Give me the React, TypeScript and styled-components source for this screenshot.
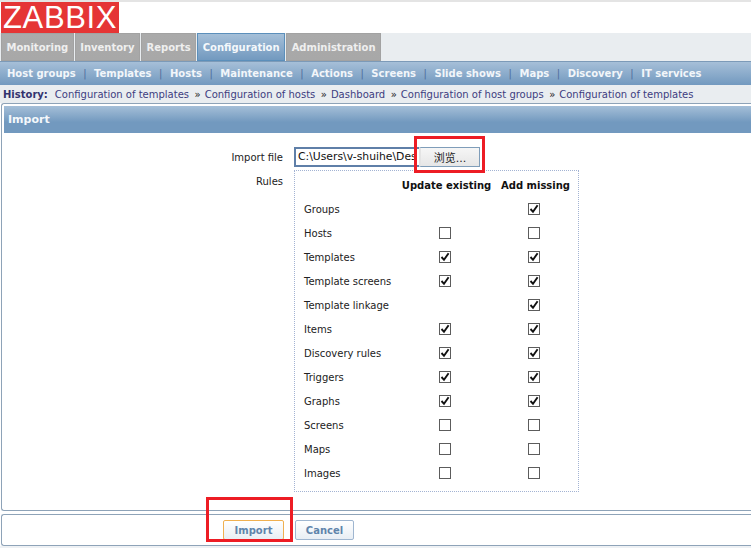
import styled, { createGlobalStyle } from "styled-components";

const GlobalStyle = createGlobalStyle`
    html, body {
        margin: 0;
        padding: 0;
        background: #fff;
    }
    body {
        width: 751px;
        height: 548px;
        overflow: hidden;
        font-family: "DejaVu Sans", Verdana, sans-serif;
        font-size: 10px;
    }
`;

const mainTabs = ["Monitoring", "Inventory", "Reports", "Configuration", "Administration"];
const subLinks = ["Host groups", "Templates", "Hosts", "Maintenance", "Actions", "Screens", "Slide shows", "Maps", "Discovery", "IT services"];
const history = [
    "Configuration of templates",
    "Configuration of hosts",
    "Dashboard",
    "Configuration of host groups",
    "Configuration of templates",
];

type Mark = boolean | null;
const rules: { name: string; update: Mark; add: Mark }[] = [
    { name: "Groups", update: null, add: true },
    { name: "Hosts", update: false, add: false },
    { name: "Templates", update: true, add: true },
    { name: "Template screens", update: true, add: true },
    { name: "Template linkage", update: null, add: true },
    { name: "Items", update: true, add: true },
    { name: "Discovery rules", update: true, add: true },
    { name: "Triggers", update: true, add: true },
    { name: "Graphs", update: true, add: true },
    { name: "Screens", update: false, add: false },
    { name: "Maps", update: false, add: false },
    { name: "Images", update: false, add: false },
];

function CheckBox({ checked }: { checked: Mark }) {
    if (checked === null) return <span />;
    return (
        <Box>
            {checked && (
                <svg width="10" height="10" viewBox="0 0 10 10">
                    <path d="M1.5 5 L4 7.8 L8.6 1.2" fill="none" stroke="#111" strokeWidth="1.9" />
                </svg>
            )}
        </Box>
    );
}

export default function App() {
    return (
        <Page>
            <GlobalStyle />
            <TopEdge />
            <Logo>ZABBIX</Logo>
            <TabBar>
                {mainTabs.map((t) => (
                    <Tab key={t} $active={t === "Configuration"}>{t}</Tab>
                ))}
            </TabBar>
            <SubNav>
                {subLinks.map((l, i) => (
                    <SubItem key={l} $first={i === 0}>{l}</SubItem>
                ))}
            </SubNav>
            <History>
                <HistoryLabel>History:</HistoryLabel>
                {history.map((h, i) => (
                    <HistoryItem key={i}>
                        {i > 0 && <Sep>»</Sep>}
                        {h}
                    </HistoryItem>
                ))}
            </History>
            <Panel>
                <PanelTitle>Import</PanelTitle>
                <FormGrid>
                    <FieldLabel>Import file</FieldLabel>
                    <FileRow>
                        <FileInput>C:\Users\v-shuihe\Des</FileInput>
                        <BrowseButton>浏览...</BrowseButton>
                    </FileRow>
                    <RulesLabel>Rules</RulesLabel>
                    <RulesBox>
                        <RulesHead>
                            <span />
                            <HeadCell>Update existing</HeadCell>
                            <HeadCell>Add missing</HeadCell>
                        </RulesHead>
                        {rules.map((r) => (
                            <RuleRow key={r.name}>
                                <RuleName>{r.name}</RuleName>
                                <CheckCell><CheckBox checked={r.update} /></CheckCell>
                                <CheckCell><CheckBox checked={r.add} /></CheckCell>
                            </RuleRow>
                        ))}
                    </RulesBox>
                </FormGrid>
            </Panel>
            <Footer>
                <ActionButton $focused>Import</ActionButton>
                <ActionButton>Cancel</ActionButton>
            </Footer>
            <BottomEdge />
            <Callout $left={414} $top={136} $width={71} $height={37} />
            <Callout $left={206} $top={497} $width={87} $height={45} />
        </Page>
    );
}

const Page = styled.div`
    position: relative;
    width: 751px;
    height: 548px;
    overflow: hidden;
    background: #fff;
`;

const TopEdge = styled.div`
    height: 2px;
    background: #e4e4e4;
`;

const BottomEdge = styled.div`
    height: 3px;
    background: #eef1f4;
`;

const Logo = styled.div`
    width: 118px;
    height: 31px;
    margin-left: 1px;
    background: #e53535;
    color: #fff;
    font-family: "Liberation Sans", Arial, sans-serif;
    font-size: 31px;
    line-height: 32px;
    letter-spacing: 0.6px;
    text-align: center;
`;

const TabBar = styled.div`
    display: flex;
    height: 28px;
    background: #e9edf0;
    gap: 1px;
    padding-left: 1px;
`;

const Tab = styled.div<{ $active?: boolean }>`
    display: flex;
    align-items: center;
    height: 28px;
    box-sizing: border-box;
    padding: 0 4.5px;
    font-size: 10px;
    font-weight: bold;
    color: ${({ $active }) => ($active ? "#f4f8fb" : "#efefef")};
    border: 1px solid ${({ $active }) => ($active ? "#5b8fbb" : "#a2a2a2")};
    background: ${({ $active }) =>
        $active ? "linear-gradient(#a5bfd8, #7299bf)" : "linear-gradient(#aaaaaa, #a8a8a8)"};
`;

const SubNav = styled.div`
    display: flex;
    align-items: center;
    height: 24px;
    box-sizing: border-box;
    padding-left: 7px;
    border-top: 1px solid #7c9ab8;
    background: linear-gradient(#a6bfd8, #7299bf);
`;

const SubItem = styled.span<{ $first?: boolean }>`
    font-size: 10px;
    font-weight: bold;
    color: #f2f6fa;
    white-space: nowrap;
    ${({ $first }) =>
        !$first &&
        `
        &::before {
            content: "|";
            font-weight: normal;
            color: #4f6d9c;
            margin: 0 7.5px;
        }
    `}
`;

const History = styled.div`
    display: flex;
    align-items: center;
    gap: 9.5px;
    height: 18px;
    padding-left: 3px;
    background: #e9edf0;
    font-size: 10px;
    white-space: nowrap;
`;

const HistoryLabel = styled.b`
    color: #33336e;
    margin-right: -2.5px;
`;

const HistoryItem = styled.span`
    color: #3d3d80;
`;

const Sep = styled.span`
    color: #222;
    margin: 0 4px 0 -4px;
`;

const Panel = styled.div`
    height: 408px;
    box-sizing: border-box;
    margin-left: 1px;
    padding-top: 2px;
    border: 1px solid #8ea3b8;
    border-right: none;
    border-radius: 3px 0 0 3px;
`;

const PanelTitle = styled.div`
    display: flex;
    align-items: center;
    height: 27px;
    margin-left: 2px;
    padding-left: 4px;
    background: linear-gradient(#a5bfd8, #7299bf 60%);
    color: #f4f8fb;
    font-size: 11px;
    font-weight: bold;
`;

const FormGrid = styled.div`
    display: grid;
    grid-template-columns: 281px 285px;
    column-gap: 11px;
    margin-top: 14px;
    color: #222;
`;

const FieldLabel = styled.div`
    text-align: right;
    font-size: 10px;
    padding-top: 5px;
`;

const RulesLabel = styled(FieldLabel)`
    padding-top: 6px;
`;

const FileRow = styled.div`
    display: flex;
    height: 20px;
    margin-bottom: 3px;
`;

const FileInput = styled.div`
    width: 121px;
    height: 16px;
    line-height: 16px;
    padding-left: 2px;
    box-sizing: content-box;
    border: 2px solid #5f7fa8;
    border-right: none;
    overflow: hidden;
    white-space: nowrap;
    font-size: 10.8px;
    color: #111;
`;

const BrowseButton = styled.div`
    display: flex;
    align-items: center;
    justify-content: center;
    width: 58px;
    height: 18px;
    border: 1px solid #7f9db9;
    border-left: 2px solid #e4e4e4;
    background: linear-gradient(#f6f6f6, #e6e6e6);
    font-family: "DejaVu Sans", "Noto Sans CJK SC", sans-serif;
    font-size: 11px;
    color: #222;
`;

const RulesBox = styled.div`
    width: 285px;
    height: 322px;
    box-sizing: border-box;
    padding-left: 9px;
    border: 1px dotted #a3b3d3;
`;

const RulesHead = styled.div`
    display: grid;
    grid-template-columns: 94px 94px 84px;
    height: 26px;
    align-items: center;
`;

const HeadCell = styled.div`
    font-weight: bold;
    font-size: 10px;
    color: #111;
    text-align: center;
    white-space: nowrap;
    padding: 3px 0 0 3px;
`;

const RuleRow = styled.div`
    display: grid;
    grid-template-columns: 94px 94px 84px;
    height: 24px;
    align-items: center;
    font-size: 10px;
    color: #222;
`;

const RuleName = styled.span`
    white-space: nowrap;
`;

const CheckCell = styled.div`
    display: flex;
    justify-content: center;
`;

const Box = styled.span`
    display: flex;
    align-items: center;
    justify-content: center;
    width: 12px;
    height: 12px;
    box-sizing: border-box;
    border: 1px solid #5c5c5c;
    background: #fff;
`;

const Footer = styled.div`
    display: flex;
    align-items: center;
    gap: 11px;
    height: 32px;
    box-sizing: border-box;
    margin: 3px 0 0 1px;
    padding-left: 221px;
    border: 1px solid #8ea3b8;
    border-right: none;
    border-radius: 3px 0 0 3px;
`;

const ActionButton = styled.div<{ $focused?: boolean }>`
    display: flex;
    align-items: center;
    justify-content: center;
    width: ${({ $focused }) => ($focused ? "61px" : "59px")};
    height: 20px;
    box-sizing: border-box;
    border: 1px solid ${({ $focused }) => ($focused ? "#f0b050" : "#9fb6d0")};
    border-radius: 2px;
    background: linear-gradient(#ffffff, #e8eef4);
    color: #5f84ab;
    font-size: 10px;
    font-weight: bold;
`;

// red annotation rectangles drawn over the screenshot
const Callout = styled.div<{ $left: number; $top: number; $width: number; $height: number }>`
    position: absolute;
    left: ${({ $left }) => $left}px;
    top: ${({ $top }) => $top}px;
    width: ${({ $width }) => $width}px;
    height: ${({ $height }) => $height}px;
    box-sizing: border-box;
    border: 3px solid #ed1c24;
`;
